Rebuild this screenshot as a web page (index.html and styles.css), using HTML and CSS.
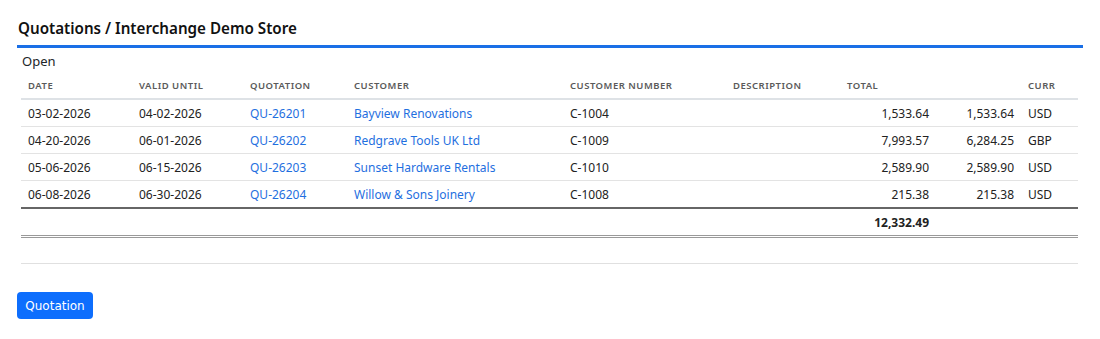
FILE: index.html
```html
<!DOCTYPE html>
<html lang="en">
<head>
    <meta charset="UTF-8">
    <meta name="viewport" content="width=device-width, initial-scale=1.0">
    <title>Quotations</title>
    <link rel="stylesheet" href="styles.css">
</head>
<body>
    <div class="page">
        <h2 class="title">Quotations / Interchange Demo Store</h2>
        <div class="section">
            <div class="status">Open</div>
            <table class="grid">
                <colgroup>
                    <col style="width:111px"><col style="width:111px"><col style="width:104px">
                    <col style="width:216px"><col style="width:163px"><col style="width:114px">
                    <col style="width:96px"><col style="width:85px"><col>
                </colgroup>
                <thead>
                    <tr>
                        <th>Date</th>
                        <th>Valid Until</th>
                        <th>Quotation</th>
                        <th>Customer</th>
                        <th>Customer Number</th>
                        <th>Description</th>
                        <th>Total</th>
                        <th></th>
                        <th>Curr</th>
                    </tr>
                </thead>
                <tbody>
                    <tr>
                        <td>03-02-2026</td><td>04-02-2026</td>
                        <td><a href="#">QU-26201</a></td><td><a href="#">Bayview Renovations</a></td>
                        <td>C-1004</td><td></td>
                        <td class="num">1,533.64</td><td class="num">1,533.64</td><td>USD</td>
                    </tr>
                    <tr>
                        <td>04-20-2026</td><td>06-01-2026</td>
                        <td><a href="#">QU-26202</a></td><td><a href="#">Redgrave Tools UK Ltd</a></td>
                        <td>C-1009</td><td></td>
                        <td class="num">7,993.57</td><td class="num">6,284.25</td><td>GBP</td>
                    </tr>
                    <tr>
                        <td>05-06-2026</td><td>06-15-2026</td>
                        <td><a href="#">QU-26203</a></td><td><a href="#">Sunset Hardware Rentals</a></td>
                        <td>C-1010</td><td></td>
                        <td class="num">2,589.90</td><td class="num">2,589.90</td><td>USD</td>
                    </tr>
                    <tr>
                        <td>06-08-2026</td><td>06-30-2026</td>
                        <td><a href="#">QU-26204</a></td><td><a href="#">Willow &amp; Sons Joinery</a></td>
                        <td>C-1008</td><td></td>
                        <td class="num">215.38</td><td class="num">215.38</td><td>USD</td>
                    </tr>
                </tbody>
                <tfoot>
                    <tr>
                        <td></td><td></td><td></td><td></td><td></td><td></td>
                        <td class="num">12,332.49</td><td></td><td></td>
                    </tr>
                </tfoot>
            </table>
            <div class="spacer"></div>
        </div>
        <button class="btn">Quotation</button>
    </div>
</body>
</html>
```

FILE: styles.css
```css
body { margin: 0; font-family: "Noto Sans", "Open Sans", sans-serif; color: #212529; background: #fff; }
.page { padding: 15px 17px 0 17px; width: 1066px; }
.title { margin: 0; font-size: 15.2px; font-weight: 600; line-height: 26px; padding: 0 0 4px 1px; border-bottom: 3px solid #1a6fe6; color: #111; }
.section { padding: 4px 5px 0 4px; }
.status { font-size: 13px; line-height: 18px; padding-left: 1px; margin-bottom: 5px; }
.grid { width: 100%; border-collapse: collapse; table-layout: fixed; font-size: 12px; }
.grid th { text-align: left; font-size: 9.5px; font-weight: 600; letter-spacing: 0.5px; text-transform: uppercase; color: #5a5a5a; padding: 5px 7px 6px 7px; border-bottom: 2px solid #dee2e6; line-height: 12px; }
.grid td { padding: 0 7px; height: 26px; border-bottom: 1px solid #e3e3e3; white-space: nowrap; color: #222; }
.grid tbody tr:last-child td { border-bottom: 2px solid #666; }
.grid td.num { text-align: right; }
.grid a { color: #1f6fe0; text-decoration: none; }
.grid tfoot td { border-bottom: 3px double #999; font-weight: 700; height: 26px; }
.spacer { height: 25px; border-bottom: 1px solid #e0e0e0; }
.btn { margin-top: 28px; font-family: "DejaVu Sans", sans-serif; font-size: 12px; color: #fff; background: #0d6efd; border: none; border-radius: 4px; padding: 0 8px; height: 27px; width: 76px; }
```
